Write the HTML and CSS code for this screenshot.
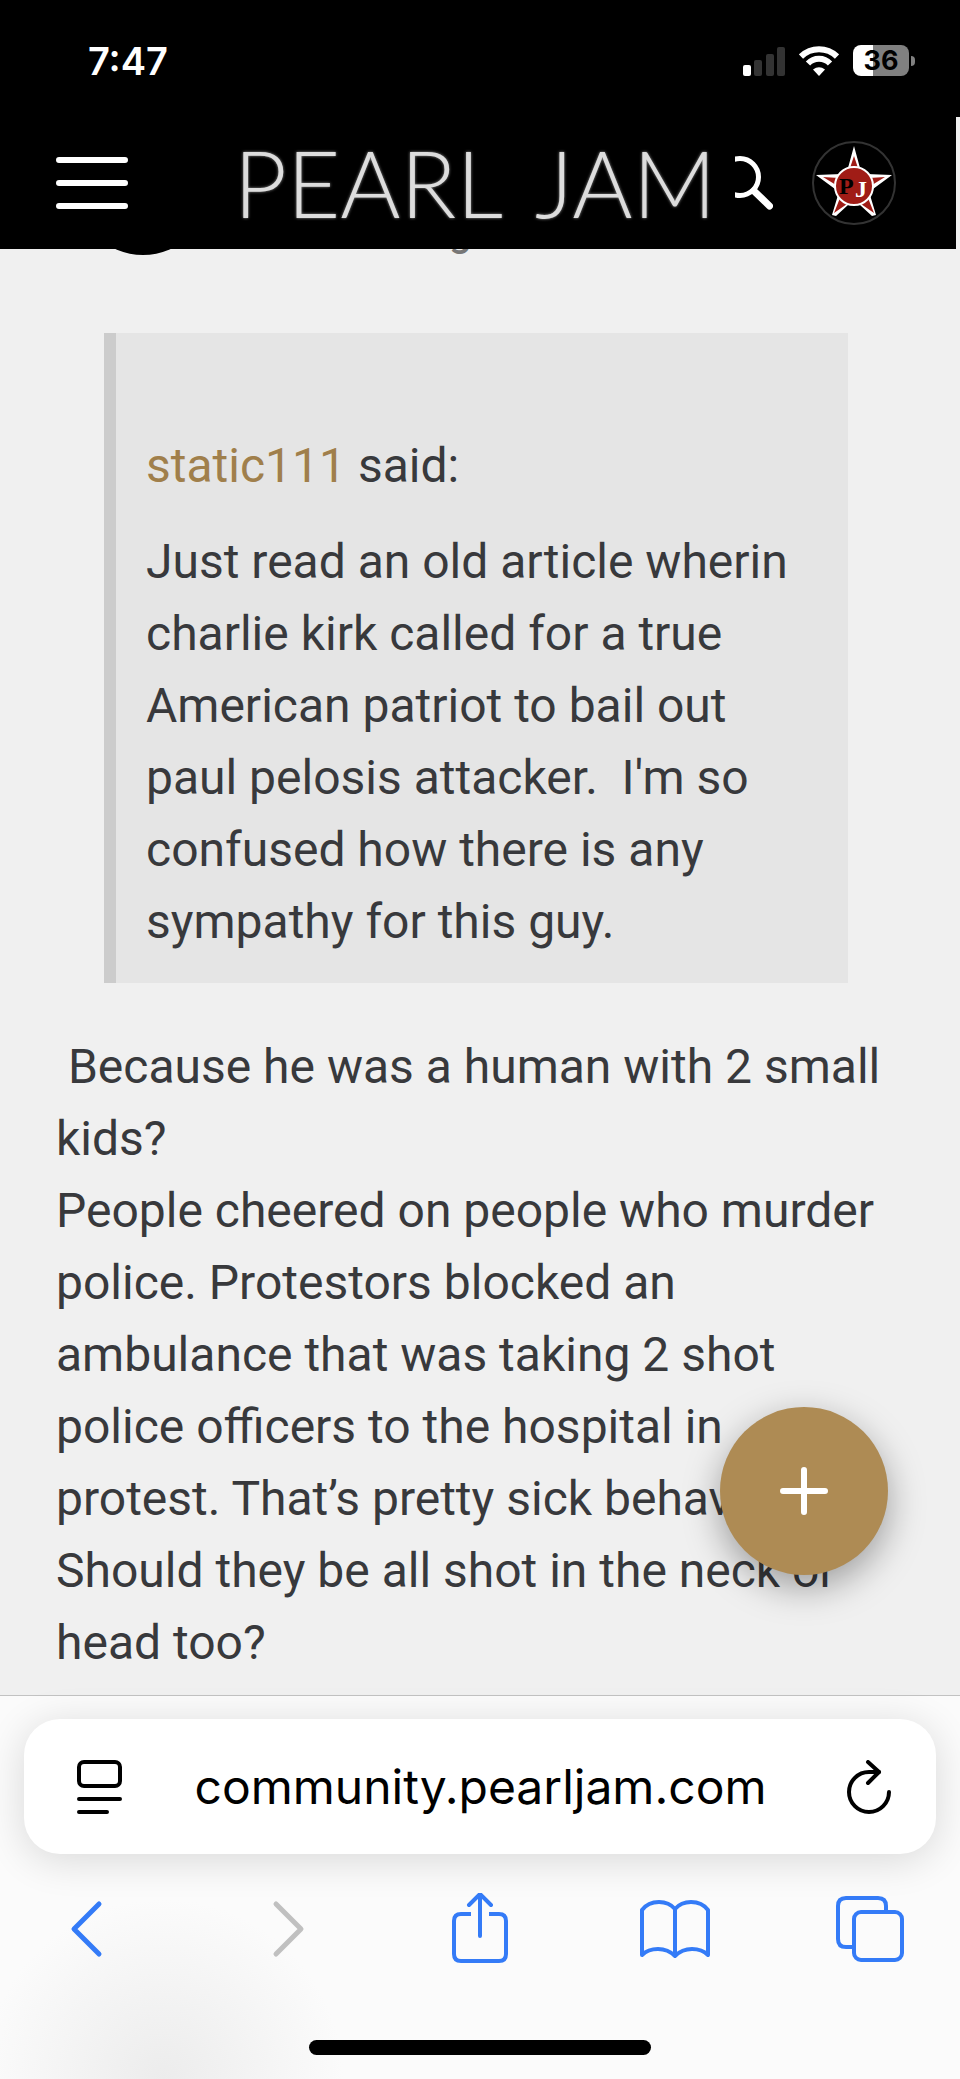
FILE: index.html
```html
<!DOCTYPE html>
<html lang="en">
  <head>
    <meta charset="UTF-8" />
    <meta name="viewport" content="width=device-width, initial-scale=1.0" />
    <title>Pearl Jam Community</title>
    <link rel="stylesheet" href="styles.css">
  </head>
  <body>
    <div class="status-bar">
      <span class="time">7:47</span>
      <div class="status-icons">
        <svg class="signal" width="42" height="30" viewBox="0 0 42 30">
          <rect x="0" y="19" width="8" height="11" rx="2" fill="#fff" />
          <rect x="11" y="14" width="8" height="16" rx="2" fill="#333" />
          <rect x="23" y="8" width="8" height="22" rx="2" fill="#333" />
          <rect x="34" y="1" width="8" height="29" rx="2" fill="#333" />
        </svg>
        <svg class="wifi" width="40" height="30" viewBox="0 0 40 30" fill="none" stroke="#fff" stroke-width="6">
          <path d="M2 10.5C12 .8 28 .8 38 10.5" />
          <path d="M9 17.5C15 11.3 25 11.3 31 17.5" />
          <path d="M20 30L14 23.500Q20 19 26 23.500Z" fill="#fff" stroke="none" />
        </svg>
        <div class="battery"><span class="battery-level">36</span><span class="battery-tip"></span></div>
      </div>
    </div>

    <header class="site-header">
      <button class="icon-btn menu-btn" type="button" aria-label="Menu">
        <svg width="72" height="52" viewBox="0 0 72 52" stroke="#fff" stroke-width="6" stroke-linecap="round">
          <path d="M3 3H69M3 26H69M3 49H69" />
        </svg>
      </button>
      <a class="logo" href="#"><span>PEARL</span><span>JAM</span></a>
      <button class="icon-btn search-btn" type="button" aria-label="Search">
        <svg width="38" height="56" viewBox="0 0 38 56" fill="none" stroke="#fff">
          <circle cx="5" cy="22" r="18.500" stroke-width="5" />
          <path d="M19 36L34.500 51" stroke-width="7" stroke-linecap="round" />
        </svg>
      </button>
      <a class="profile" href="#" aria-label="Profile">
        <svg width="84" height="84" viewBox="0 0 84 84">
          <circle cx="42" cy="42" r="41" fill="#000" stroke="#333" stroke-width="2" />
          <path d="M42 5L48 27L54 33L80 34L61 48L58 54L64 74L60 75L48 64H36L24 75L20 74L26 54L23 48L4 34L30 33L36 27Z" fill="#fff" />
          <path d="M42 15L46 27H38ZM11 36L27 37L24 44ZM73 36L57 37L60 44ZM28 57L35 63L22 72ZM56 57L49 63L62 72Z" fill="#a01c16" />
          <circle cx="42" cy="45" r="19" fill="#a01c16" stroke="#fff" stroke-width="2" />
          <text class="badge-letter" x="27" y="53" fill="#000">P</text>
          <text class="badge-letter" x="43" y="56" fill="#fff">J</text>
        </svg>
      </a>
    </header>

    <main class="content">
      <div class="post-meta">
        <span class="avatar"></span>
        <span class="post-date">g</span>
      </div>
      <article class="post">
        <blockquote class="quote">
          <p class="quote-author"><a href="#">static111</a> said:</p>
          <p>Just read an old article wherin charlie kirk called for a true American patriot to bail out paul pelosis attacker.&nbsp; I'm so confused how there is any sympathy for this guy.</p>
        </blockquote>
        <p>&nbsp;Because he was a human with 2 small kids?</p>
        <p>People cheered on people who murder police. Protestors blocked an ambulance that was taking 2 shot police officers to the hospital in protest. That’s pretty sick behavior. Should they be all shot in the neck or head too?</p>
      </article>
      <button class="add-btn" type="button" aria-label="New post">
        <svg width="48" height="48" viewBox="0 0 48 48" stroke="#fff" stroke-width="6" stroke-linecap="round">
          <path d="M24 3V45M3 24H45" />
        </svg>
      </button>
    </main>

    <footer class="browser-bar">
      <div class="address-bar">
        <button class="icon-btn" type="button" aria-label="Page settings">
          <svg width="45" height="54" viewBox="0 0 45 54" fill="none" stroke="#000" stroke-width="4" stroke-linecap="round">
            <rect x="2" y="2" width="41" height="24" rx="5" />
            <path d="M2 39H43M2 52H30" />
          </svg>
        </button>
        <input class="address" type="text" value="community.pearljam.com" aria-label="Address" />
        <button class="icon-btn" type="button" aria-label="Reload">
          <svg width="45" height="54" viewBox="0 0 45 54" fill="none" stroke="#000" stroke-width="4" stroke-linecap="round" stroke-linejoin="round">
            <path d="M42 32A20 20 0 1 1 22 12H32" />
            <path d="M21 2L32 12L21 23" />
          </svg>
        </button>
      </div>
      <nav class="toolbar">
        <button class="icon-btn" type="button" aria-label="Back">
          <svg class="chevron" width="72" height="72" viewBox="0 0 72 72"><path d="M49 11L24 36L49 61" /></svg>
        </button>
        <button class="icon-btn" type="button" aria-label="Forward" disabled>
          <svg class="chevron" width="72" height="72" viewBox="0 0 72 72"><path d="M30 11L55 36L30 61" /></svg>
        </button>
        <button class="icon-btn" type="button" aria-label="Share">
          <svg width="72" height="72" viewBox="0 0 72 72">
            <path d="M29 21H19Q12 21 12 28V61Q12 68 19 68H57Q64 68 64 61V28Q64 21 57 21H47" stroke-linecap="butt" />
            <path d="M38 43V2M27 12L38 1L49 12" />
          </svg>
        </button>
        <button class="icon-btn" type="button" aria-label="Bookmarks">
          <svg width="72" height="72" viewBox="0 0 72 72">
            <path d="M37 16Q31 9 21 9Q10 9 4 17V62Q10 56 20 56Q30 56 37 63Q44 56 54 56Q64 56 70 62V17Q64 9 53 9Q43 9 37 16V63" />
          </svg>
        </button>
        <button class="icon-btn" type="button" aria-label="Tabs">
          <svg width="72" height="72" viewBox="0 0 72 72">
            <path d="M19 54H12Q4 54 4 46V13Q4 5 12 5H44Q52 5 52 13V19" stroke-linecap="butt" />
            <rect x="20" y="19" width="48" height="48" rx="7" />
          </svg>
        </button>
      </nav>
      <div class="home-indicator"></div>
    </footer>
  </body>
</html>
```
FILE: styles.css
```css
* {
  box-sizing: border-box;
}
body {
  margin: 0;
  font-family: Roboto, Arial, sans-serif;
  font-size: 48px;
  line-height: 72px;
  color: #38393c;
  background-color: #f0f0f0;
}
p {
  margin: 0;
}
svg {
  display: block;
}
.icon-btn {
  padding: 0;
  border: none;
  background: none;
  cursor: pointer;
}

/* phone status bar */
.status-bar {
  display: flex;
  justify-content: space-between;
  align-items: center;
  height: 117px;
  padding: 4px 45px 0 88px;
  background-color: #000;
  color: #fff;
  font-family: Inter, Arial, sans-serif;
}
.time {
  font-size: 38px;
  font-weight: 600;
}
.status-icons {
  display: flex;
  align-items: center;
  gap: 14px;
}
.battery {
  display: flex;
  align-items: center;
  gap: 2px;
}
.battery-level {
  width: 56px;
  height: 31px;
  border-radius: 8px;
  background: linear-gradient(to right, #fff 36%, #808080 36%);
  color: #000;
  font-size: 27px;
  font-weight: 700;
  line-height: 31px;
  text-align: center;
}
.battery-tip {
  width: 4px;
  height: 10px;
  border-radius: 0 4px 4px 0;
  background-color: #808080;
}

/* site header */
.site-header {
  position: relative;
  z-index: 2;
  display: flex;
  align-items: center;
  height: 132px;
  margin-right: 4px;
  padding: 0 60px 0 56px;
  background-color: #000;
}
.logo {
  flex: 1;
  display: flex;
  justify-content: center;
  gap: 32px;
  font-family: Lato, sans-serif;
  font-size: 92px;
  font-weight: 300;
  color: #ddd;
  text-decoration: none;
  text-shadow: 0 0 3px #999;
}
.menu-btn {
  margin-right: 104px;
}
.search-btn {
  margin: 0 39px 0 17px;
}
.badge-letter {
  font-family: "Liberation Serif", serif;
  font-size: 24px;
  font-weight: 700;
}

/* post */
.content {
  position: relative;
  padding: 0 64px 16px 56px;
}
.post-meta {
  display: flex;
  align-items: flex-end;
  height: 136px;
  margin: -130px 0 78px;
  padding-left: 19px;
}
.avatar {
  width: 136px;
  height: 136px;
  border-radius: 50%;
  background-color: #000;
}
.post-date {
  margin-left: 238px;
  font-size: 40px;
  font-weight: 500;
  line-height: 44px;
  color: #777;
}
.quote {
  margin: 0 48px 48px;
  padding: 97px 30px 25px;
  border-left: 12px solid #ccc;
  background-color: #e5e5e5;
}
.quote-author {
  margin-bottom: 24px;
}
.quote-author a {
  color: #a07f4b;
  text-decoration: none;
}
.add-btn {
  position: absolute;
  right: 72px;
  bottom: 120px;
  display: flex;
  justify-content: center;
  align-items: center;
  width: 168px;
  height: 168px;
  border: none;
  border-radius: 50%;
  background-color: #ae8b54;
  box-shadow: 0 12px 36px rgba(0, 0, 0, 0.35);
  cursor: pointer;
}

/* browser controls */
.browser-bar {
  border-top: 1px solid #c2c2c2;
  padding: 23px 24px 24px;
  background: radial-gradient(circle at 17% 100%, #ececec, #fbfbfb 180px);
}
.address-bar {
  display: flex;
  align-items: center;
  height: 135px;
  padding: 0 44px 0 53px;
  border-radius: 36px;
  background-color: #fff;
  box-shadow: 0 6px 40px rgba(0, 0, 0, 0.14);
}
.address {
  flex: 1;
  min-width: 0;
  padding: 0 8px 0 0;
  border: none;
  background: none;
  color: #000;
  font-family: Inter, Arial, sans-serif;
  font-size: 48px;
  text-align: center;
  outline: none;
}
.toolbar {
  display: flex;
  justify-content: space-between;
  padding: 39px 30px 75px 26px;
}
.toolbar svg {
  fill: none;
  stroke: #347bf7;
  stroke-width: 4;
  stroke-linecap: round;
  stroke-linejoin: round;
}
.toolbar .chevron {
  stroke-width: 5;
}
.toolbar button:disabled svg {
  stroke: #c0c0c0;
}
.home-indicator {
  width: 342px;
  height: 15px;
  margin: 0 auto;
  border-radius: 8px;
  background-color: #000;
}
```
